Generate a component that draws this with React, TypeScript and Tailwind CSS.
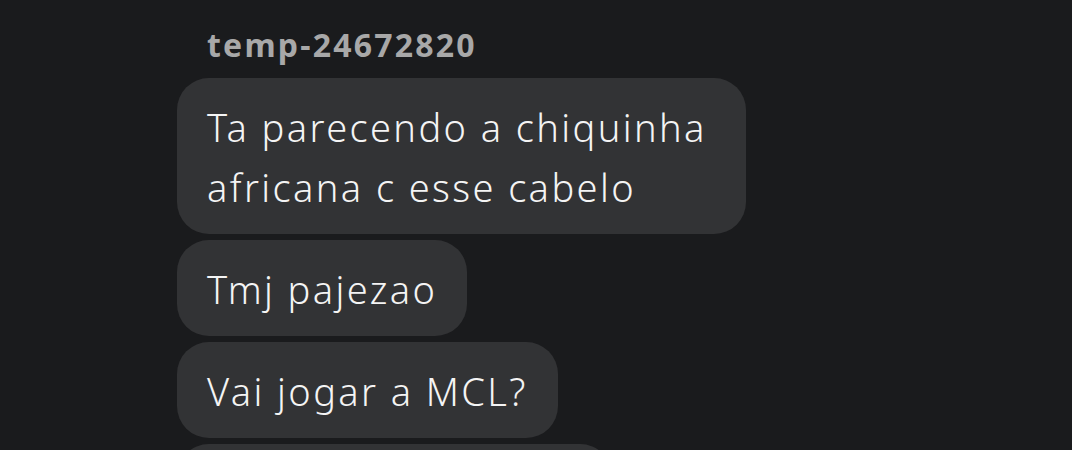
import React from "react";

function Bubble({ children }: { children: React.ReactNode }) {
  return (
    <div className="w-fit max-w-[569px] rounded-[32px] bg-[#323335] px-[30px] pt-[19px] pb-[17px] text-[38px] font-light leading-[60px] tracking-[2.4px] text-[#f4f4f4]">
      {children}
    </div>
  );
}

export default function App() {
  return (
    <div className="h-[450px] w-full overflow-hidden bg-[#1a1b1d] font-['Noto_Sans','Open_Sans',sans-serif]">
      <div className="flex flex-col gap-[6px] pl-[177px] pt-[22px]">
        <div className="pl-[30px] text-[32px] font-bold leading-[46px] tracking-[2.2px] text-[#a8a8a8]">temp-24672820</div>
        <div className="mt-[4px] flex flex-col gap-[6px]">
          <Bubble>Ta parecendo a chiquinha africana c esse cabelo</Bubble>
          <Bubble>Tmj pajezao</Bubble>
          <Bubble>Vai jogar a MCL?</Bubble>
          <Bubble>Bora jogar hoje mn</Bubble>
        </div>
      </div>
    </div>
  );
}
